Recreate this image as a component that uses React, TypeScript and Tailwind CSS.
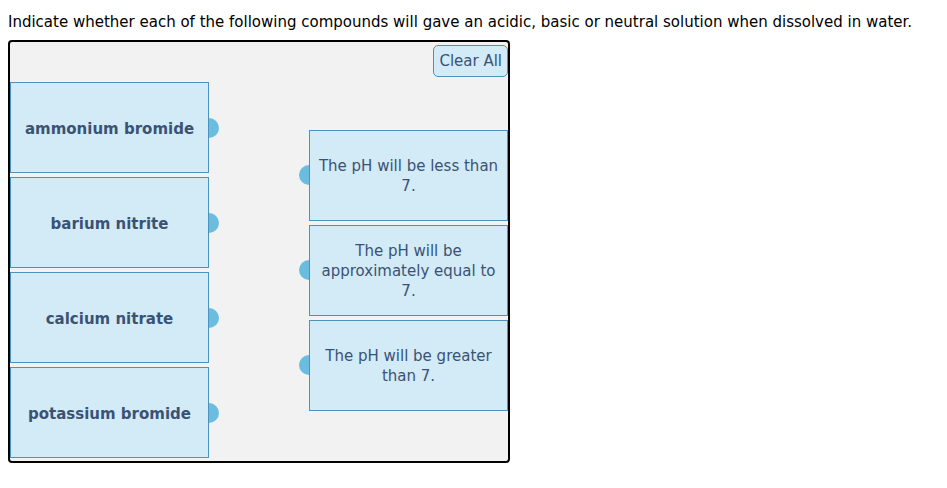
import React from "react";

const compounds = [
  "ammonium bromide",
  "barium nitrite",
  "calcium nitrate",
  "potassium bromide",
];

const targets = [
  ["The pH will be less than", "7."],
  ["The pH will be", "approximately equal to", "7."],
  ["The pH will be greater", "than 7."],
];

function SourceCard({ label }: { label: string }) {
  return (
    <div className="relative flex h-[91px] w-[199px] items-center justify-center border border-[#4a93bf] bg-[#d3eaf7] pt-[3px]">
      <span className="text-[15px] font-bold text-[#3a5374]">{label}</span>
      {/* connector tab */}
      <div className="absolute right-[-11px] top-1/2 h-[20px] w-[10px] -translate-y-1/2 rounded-r-full bg-[#6bbde0]" />
    </div>
  );
}

function TargetCard({ lines }: { lines: string[] }) {
  return (
    <div className="relative flex h-[91px] w-[199px] flex-col items-center justify-center border border-[#4a93bf] bg-[#d3eaf7] text-center">
      {lines.map((l) => (
        <span key={l} className="text-[15px] leading-[20px] text-[#3a5374]">
          {l}
        </span>
      ))}
      <div className="absolute left-[-11px] top-[34px] h-[20px] w-[10px] rounded-l-full bg-[#6bbde0]" />
    </div>
  );
}

export default function App() {
  return (
    <div className="min-h-screen bg-white font-['DejaVu_Sans',Verdana,sans-serif]">
      <p className="px-2 pt-[12px] text-[15px] leading-[20px] text-black">
        Indicate whether each of the following compounds will gave an acidic,
        basic or neutral solution when dissolved in water.
      </p>

      <div className="ml-2 mt-[8px] flex h-[423px] w-[502px] flex-col rounded-[4px] border-2 border-black bg-[#f2f2f2]">
        <div className="flex justify-end pt-[3px]">
          <button className="h-[32px] rounded-[5px] border border-[#4a93bf] bg-[#d3eaf7] px-[5px] text-[15px] text-[#3a5374]">
            Clear All
          </button>
        </div>

        <div className="mt-[5px] flex justify-between">
          <div className="flex flex-col gap-[4px]">
            {compounds.map((c) => (
              <SourceCard key={c} label={c} />
            ))}
          </div>
          <div className="mt-[48px] flex flex-col gap-[4px]">
            {targets.map((t) => (
              <TargetCard key={t[0]} lines={t} />
            ))}
          </div>
        </div>
      </div>
    </div>
  );
}
